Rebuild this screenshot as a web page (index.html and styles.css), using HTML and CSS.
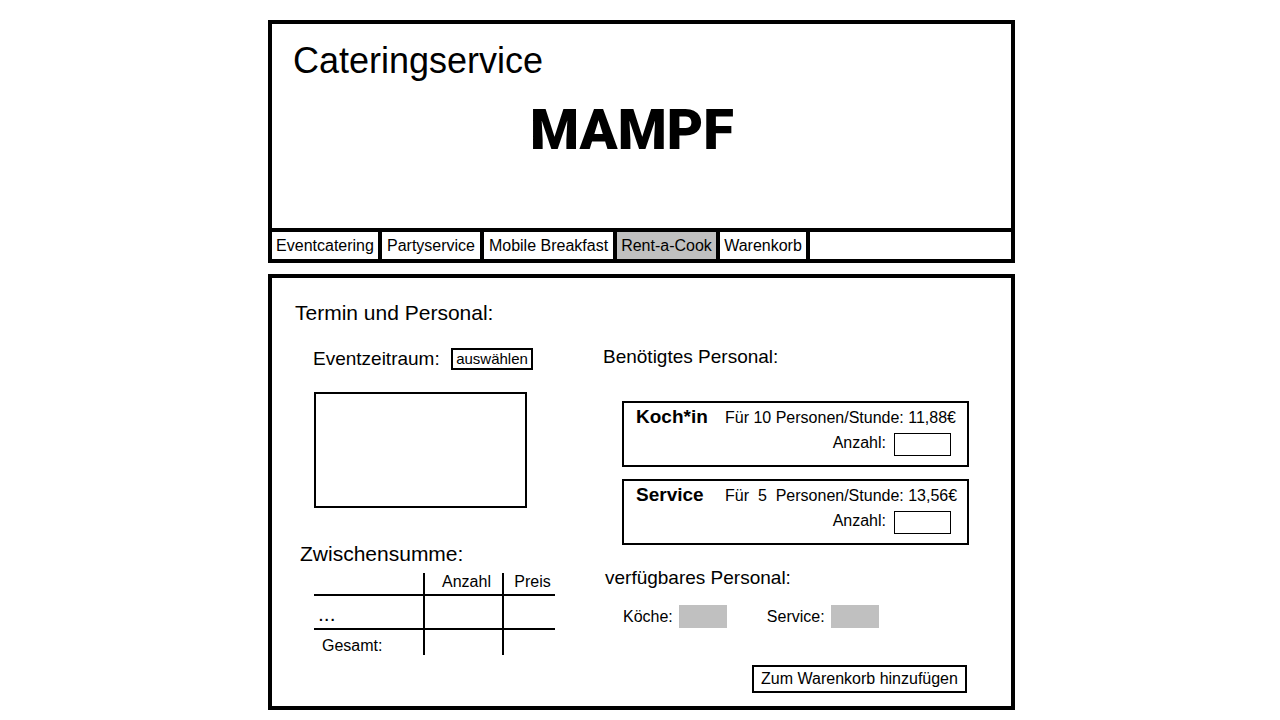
FILE: index.html
```html
<!DOCTYPE html>
<html lang="de">
<head>
<meta charset="utf-8">
<meta name="viewport" content="width=device-width, initial-scale=1">
<title>Cateringservice MAMPF</title>
<link rel="stylesheet" href="styles.css">
</head>
<body>
<div class="page">
  <header class="header">
    <div class="brand">
      <p class="tagline">Cateringservice</p>
      <h1 class="logo">MAMPF</h1>
    </div>
    <nav class="nav">
      <a class="tab" href="#event">Eventcatering</a>
      <a class="tab" href="#party">Partyservice</a>
      <a class="tab" href="#breakfast">Mobile Breakfast</a>
      <a class="tab tab-active" href="#cook" aria-current="page">Rent-a-Cook</a>
      <a class="tab" href="#cart">Warenkorb</a>
    </nav>
  </header>

  <main class="panel">
    <h2 class="title">Termin und Personal:</h2>
    <div class="columns">
      <div class="booking">
        <div class="period">
          <h3 class="subtitle">Eventzeitraum:</h3>
          <button class="button button-small" type="button">auswählen</button>
        </div>
        <div class="calendar"></div>
        <h2 class="title sum-title">Zwischensumme:</h2>
        <table class="sum">
          <thead>
            <tr class="head"><td class="item"></td><th class="count" scope="col">Anzahl</th><th class="price" scope="col">Preis</th></tr>
          </thead>
          <tbody>
            <tr class="entry"><td class="item dots">...</td><td></td><td></td></tr>
          </tbody>
          <tfoot>
            <tr><th class="item total" scope="row">Gesamt:</th><td></td><td></td></tr>
          </tfoot>
        </table>
      </div>

      <div class="staff">
        <h3 class="subtitle">Benötigtes Personal:</h3>
        <div class="cards">
          <section class="card">
            <h4 class="role">Koch*in</h4>
            <p class="rate">Für 10 Personen/Stunde: 11,88€</p>
            <div class="amount"><label for="cooks">Anzahl:</label><input class="number" id="cooks" type="text" inputmode="numeric"></div>
          </section>
          <section class="card">
            <h4 class="role">Service</h4>
            <p class="rate">Für  5  Personen/Stunde: 13,56€</p>
            <div class="amount"><label for="waiters">Anzahl:</label><input class="number" id="waiters" type="text" inputmode="numeric"></div>
          </section>
        </div>
        <h3 class="subtitle available-title">verfügbares Personal:</h3>
        <div class="available">
          <div class="stock"><label for="free-cooks">Köche:</label><output class="value" id="free-cooks"></output></div>
          <div class="stock"><label for="free-waiters">Service:</label><output class="value" id="free-waiters"></output></div>
        </div>
        <button class="button button-submit" type="submit">Zum Warenkorb hinzufügen</button>
      </div>
    </div>
  </main>
</div>
</body>
</html>
```
FILE: styles.css
```css
* {
  box-sizing: border-box;
}

body {
  margin: 0;
  padding: 20px 0 10px 3px;
  background: #fff;
  color: #000;
  font: 16px/20px "Liberation Sans", Arial, sans-serif;
}

h1, h2, h3, h4, p {
  margin: 0;
}

.page {
  display: flex;
  flex-direction: column;
  gap: 11px;
  max-width: 747px;
  margin: 0 auto;
}

.header,
.panel {
  border: 4px solid #000;
}

.brand {
  padding: 17px 40px 69px 21px;
}

.tagline {
  font-size: 36px;
  line-height: 40px;
}

.logo {
  padding-top: 20px;
  font: 900 56px/58px Roboto, "Liberation Sans", sans-serif;
  text-align: center;
}

.nav {
  display: grid;
  grid-template-columns: 110px 102px 133px 103px 90px;
  border-top: 4px solid #000;
}

.tab {
  padding: 4px 0 3px;
  border-right: 4px solid #000;
  color: inherit;
  text-align: center;
  text-decoration: none;
  white-space: nowrap;
}

.tab-active {
  background: #c0c0c0;
}

.panel {
  padding: 23px 42px 13px 23px;
}

.title {
  font-size: 21px;
  font-weight: 400;
  line-height: 24px;
}

.subtitle {
  font-size: 19px;
  font-weight: 400;
  line-height: 22px;
}

.columns {
  display: grid;
  grid-template-columns: 308px 1fr;
  padding-top: 21px;
}

.booking {
  padding: 2px 48px 0 18px;
}

.period {
  display: flex;
  justify-content: space-between;
  padding-right: 22px;
}

.calendar {
  width: 213px;
  height: 116px;
  margin: 22px 0 34px 1px;
  border: 2px solid #000;
}

.sum-title {
  margin-left: -13px;
}

.sum {
  width: 241px;
  margin: 7px 0 0 1px;
  border-collapse: collapse;
  table-layout: fixed;
}

.sum td,
.sum th {
  height: 25px;
  padding: 0;
  border-left: 2px solid #000;
  font-weight: 400;
  line-height: 18px;
  vertical-align: top;
}

.sum tr > :first-child {
  border-left: 0;
}

.sum .head > * {
  height: 22px;
}

.sum .item {
  width: 110px;
  text-align: left;
}

.sum .count {
  width: 79px;
  padding-left: 6px;
}

.sum .price {
  padding-left: 6px;
}

.entry {
  height: 34px;
  border-top: 2px solid #000;
  border-bottom: 2px solid #000;
}

.sum .dots {
  padding: 9px 0 0 4px;
  font-size: 21px;
}

.sum .total {
  padding: 7px 0 0 8px;
}

.button {
  padding: 0;
  border: 2px solid #000;
  background: #fff;
  color: inherit;
  font: 16px/20px "Liberation Sans", Arial, sans-serif;
}

.button-small {
  width: 82px;
  height: 22px;
  font-size: 15px;
  line-height: 18px;
}

.cards {
  display: grid;
  gap: 12px;
  padding: 33px 0 22px 19px;
}

.card {
  display: grid;
  grid-template-columns: 89px 1fr;
  row-gap: 5px;
  align-items: baseline;
  padding: 3px 0 9px 12px;
  border: 2px solid #000;
}

.role {
  font-size: 19px;
  line-height: 22px;
}

.rate {
  white-space: pre;
}

.amount {
  display: flex;
  grid-column: 1 / -1;
  justify-content: flex-end;
  gap: 8px;
  padding-right: 16px;
}

.number {
  width: 57px;
  height: 23px;
  padding: 0 4px;
  border: 1px solid #000;
  background: #fff;
  font: inherit;
}

.available-title {
  margin-left: 2px;
}

.available {
  display: flex;
  gap: 40px;
  padding: 16px 0 37px 20px;
}

.stock {
  display: flex;
  align-items: center;
  gap: 6px;
}

.value {
  width: 48px;
  height: 23px;
  background: #c0c0c0;
}

.button-submit {
  display: block;
  width: 215px;
  height: 28px;
  margin: 0 2px 0 auto;
}
```
